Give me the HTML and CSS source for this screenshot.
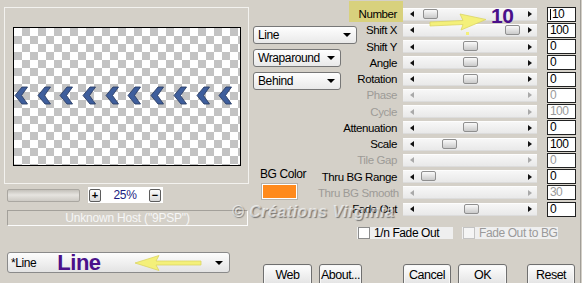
FILE: index.html
```html
<!DOCTYPE html>
<html lang="en">
<head>
  <meta charset="UTF-8">
  <title>Picture Tube • Line</title>
  <link rel="stylesheet" href="styles.css">
</head>
<body>

  <div class="dialog">

    <!-- preview side -->
    <div class="left">
      <div class="preview">
        <div class="canvas">
          <div class="chevrons">
            <svg class="chev" viewBox="0 0 14 19"><path d="M13.5 1 L8 1 L1 9.5 L8 18 L13.5 18 L7.5 9.5 Z"/></svg>
            <svg class="chev" viewBox="0 0 14 19"><path d="M13.5 1 L8 1 L1 9.5 L8 18 L13.5 18 L7.5 9.5 Z"/></svg>
            <svg class="chev" viewBox="0 0 14 19"><path d="M13.5 1 L8 1 L1 9.5 L8 18 L13.5 18 L7.5 9.5 Z"/></svg>
            <svg class="chev" viewBox="0 0 14 19"><path d="M13.5 1 L8 1 L1 9.5 L8 18 L13.5 18 L7.5 9.5 Z"/></svg>
            <svg class="chev" viewBox="0 0 14 19"><path d="M13.5 1 L8 1 L1 9.5 L8 18 L13.5 18 L7.5 9.5 Z"/></svg>
            <svg class="chev" viewBox="0 0 14 19"><path d="M13.5 1 L8 1 L1 9.5 L8 18 L13.5 18 L7.5 9.5 Z"/></svg>
            <svg class="chev" viewBox="0 0 14 19"><path d="M13.5 1 L8 1 L1 9.5 L8 18 L13.5 18 L7.5 9.5 Z"/></svg>
            <svg class="chev" viewBox="0 0 14 19"><path d="M13.5 1 L8 1 L1 9.5 L8 18 L13.5 18 L7.5 9.5 Z"/></svg>
            <svg class="chev" viewBox="0 0 14 19"><path d="M13.5 1 L8 1 L1 9.5 L8 18 L13.5 18 L7.5 9.5 Z"/></svg>
            <svg class="chev" viewBox="0 0 14 19"><path d="M13.5 1 L8 1 L1 9.5 L8 18 L13.5 18 L7.5 9.5 Z"/></svg>
          </div>
        </div>
      </div>

      <div class="zoom-row">
        <div class="progress"></div>
        <div class="zoom-ctl">
          <span class="zbtn">+</span>
          <span class="zval">25%</span>
          <span class="zbtn">−</span>
        </div>
      </div>

      <div class="host">Unknown Host ("9PSP")</div>

      <div class="preset">
        <span class="preset-name">*Line</span>
        <span class="note note-line">Line</span>
        <svg class="arrow-left" width="68" height="18" viewBox="0 0 68 18">
          <polygon points="1,9 25,1.5 22,7 67,7 67,11 22,11 25,16.5"/>
        </svg>
        <span class="caret"></span>
      </div>
    </div>

    <!-- settings side -->
    <div class="right">
      <div class="top">
        <div class="mid">
          <div class="sel sel-line">Line<span class="caret"></span></div>
          <div class="sel">Wraparound<span class="caret"></span></div>
          <div class="sel">Behind<span class="caret"></span></div>
          <div class="bg-label">BG Color</div>
          <div class="swatch"></div>
        </div>

        <div class="sliders">
          <div class="row">
            <span class="label"><span class="hl">Number</span></span>
            <div class="track"><i class="arr-l"></i><i class="arr-r"></i><b class="thumb" style="left:20px"></b></div>
            <span class="val"><i class="cursor"></i>10</span>
          </div>
          <div class="row">
            <span class="label">Shift X</span>
            <div class="track"><i class="arr-l"></i><i class="arr-r"></i><b class="thumb" style="left:102px"></b></div>
            <span class="val">100</span>
          </div>
          <div class="row">
            <span class="label">Shift Y</span>
            <div class="track"><i class="arr-l"></i><i class="arr-r"></i><b class="thumb" style="left:60px"></b></div>
            <span class="val">0</span>
          </div>
          <div class="row">
            <span class="label">Angle</span>
            <div class="track"><i class="arr-l"></i><i class="arr-r"></i><b class="thumb" style="left:60px"></b></div>
            <span class="val">0</span>
          </div>
          <div class="row">
            <span class="label">Rotation</span>
            <div class="track"><i class="arr-l"></i><i class="arr-r"></i><b class="thumb" style="left:60px"></b></div>
            <span class="val">0</span>
          </div>
          <div class="row off">
            <span class="label">Phase</span>
            <div class="track"><i class="arr-l"></i><i class="arr-r"></i></div>
            <span class="val">0</span>
          </div>
          <div class="row off">
            <span class="label">Cycle</span>
            <div class="track"><i class="arr-l"></i><i class="arr-r"></i></div>
            <span class="val">100</span>
          </div>
          <div class="row">
            <span class="label">Attenuation</span>
            <div class="track"><i class="arr-l"></i><i class="arr-r"></i><b class="thumb" style="left:60px"></b></div>
            <span class="val">0</span>
          </div>
          <div class="row">
            <span class="label">Scale</span>
            <div class="track"><i class="arr-l"></i><i class="arr-r"></i><b class="thumb" style="left:39px"></b></div>
            <span class="val">100</span>
          </div>
          <div class="row off">
            <span class="label">Tile Gap</span>
            <div class="track"><i class="arr-l"></i><i class="arr-r"></i></div>
            <span class="val">0</span>
          </div>
          <div class="row">
            <span class="label">Thru BG Range</span>
            <div class="track"><i class="arr-l"></i><i class="arr-r"></i><b class="thumb" style="left:18px"></b></div>
            <span class="val">0</span>
          </div>
          <div class="row off">
            <span class="label">Thru BG Smooth</span>
            <div class="track"><i class="arr-l"></i><i class="arr-r"></i></div>
            <span class="val">30</span>
          </div>
          <div class="row">
            <span class="label">Fade Out</span>
            <div class="track"><i class="arr-l"></i><i class="arr-r"></i><b class="thumb" style="left:61px"></b></div>
            <span class="val">0</span>
          </div>
        </div>
      </div>

      <div class="checks">
        <label class="chk"><span class="box"></span>1/n Fade Out</label>
        <label class="chk off"><span class="box"></span>Fade Out to BG</label>
      </div>

      <div class="buttons">
        <button class="btn b-web">Web</button>
        <button class="btn b-about">About...</button>
        <button class="btn b-cancel">Cancel</button>
        <button class="btn b-ok">OK</button>
        <button class="btn b-reset">Reset</button>
      </div>
    </div>
  </div>

  <!-- tutorial annotations -->
  <div class="note note-ten">10</div>
  <svg class="arrow-right" width="60" height="22" viewBox="0 0 60 22">
    <polygon points="2,11 35,9.5 32,3 58,8.5 33,19 35,13.5 2,15"/>
  </svg>
  <span class="dot"></span>
  <div class="watermark">© Créations Virginia</div>

</body>
</html>
```

FILE: styles.css
```css
* { box-sizing: border-box; }

body {
  margin: 0;
  width: 582px;
  height: 283px;
  overflow: hidden;
  position: relative;
  background: #d4d0c8;
  font-family: "Liberation Sans", Arial, sans-serif;
  font-size: 11.5px;
  letter-spacing: -0.4px;
  color: #000;
}

.dialog {
  display: flex;
  width: 581px;
  height: 283px;
  border-right: 1px solid #a19e97;
}

/* ---------- left: preview ---------- */
.left {
  width: 250px;
  flex: none;
  padding: 7px 0 0 4px;
  display: flex;
  flex-direction: column;
}
.preview {
  width: 245px;
  height: 177px;
  border: 1px solid #f3f2ef;
  padding: 19px 0 0 8px;
}
.canvas {
  width: 228px;
  height: 139px;
  border: 1px solid #000;
  background-color: #fff;
  background-image:
    linear-gradient(45deg, #c3c3c3 25%, transparent 25%, transparent 75%, #c3c3c3 75%),
    linear-gradient(45deg, #c3c3c3 25%, transparent 25%, transparent 75%, #c3c3c3 75%);
  background-size: 16px 16px;
  background-position: 0 0, 8px 8px;
  display: flex;
  align-items: center;
}
.chevrons {
  display: flex;
  gap: 8.7px;
  margin-top: -2px;
}
.chev { width: 14px; height: 19px; }
.chev path {
  fill: #3e5e9c;
  stroke: #2b3e66;
  stroke-width: 0.9;
  stroke-linejoin: round;
}

.zoom-row {
  margin-top: 3px;
  height: 16px;
  display: flex;
  align-items: center;
}
.progress {
  margin-left: 3px;
  width: 73px;
  height: 13px;
  border: 1px solid #aaa7a1;
  border-radius: 2px;
  background: linear-gradient(#c4c1bb, #e6e4e0 45%, #cdcac4);
}
.zoom-ctl {
  margin-left: 8px;
  width: 75px;
  height: 16px;
  background: #fff;
  padding: 0 2px 0 1px;
  display: flex;
  align-items: center;
  justify-content: space-between;
}
.zbtn {
  width: 12px;
  height: 13px;
  border: 1px solid #5c5c5c;
  border-radius: 2px;
  background: linear-gradient(#fbfbfb, #d9d9d9);
  font-size: 11px;
  font-weight: bold;
  line-height: 11px;
  text-align: center;
  letter-spacing: 0;
}
.zval { color: #1b1b80; font-size: 12px; letter-spacing: -0.3px; }

.host {
  margin: 7px 0 0 3px;
  width: 241px;
  height: 16px;
  border-top: 1px solid #a3a09a;
  border-left: 1px solid #a3a09a;
  border-bottom: 1px solid #fbfbfb;
  border-right: 1px solid #fbfbfb;
  color: #f6f6f6;
  text-align: center;
  font-size: 12px;
  line-height: 14px;
  letter-spacing: -0.2px;
}

.preset {
  margin: 26px 0 0 3px;
  width: 223px;
  height: 21px;
  border: 1px solid #8a8a8a;
  border-radius: 3px;
  background: linear-gradient(#fdfdfd, #e3e3e3);
  padding-left: 3px;
  display: flex;
  align-items: center;
}
.preset-name { font-size: 12px; }
.note-line { margin-left: 21px; }
.arrow-left { margin-left: 33px; }
.preset .caret { margin: 0 6px 0 auto; }

.note {
  font-weight: bold;
  font-size: 22px;
  line-height: 1;
  color: #4a108a;
  letter-spacing: -0.5px;
}
.arrow-left polygon, .arrow-right polygon {
  fill: #f4f07a;
  stroke: #dcd663;
  stroke-width: 0.8;
}

.caret {
  width: 0;
  height: 0;
  border-left: 4px solid transparent;
  border-right: 4px solid transparent;
  border-top: 4px solid #000;
}

/* ---------- right: settings ---------- */
.right {
  flex: 1;
  display: flex;
  flex-direction: column;
}
.top { display: flex; }

.mid {
  width: 68px;
  flex: none;
  padding: 26px 0 0 3px;
  display: flex;
  flex-direction: column;
  align-items: flex-start;
}
.sel {
  flex: none;
  width: 88px;
  height: 18px;
  margin-bottom: 5px;
  border: 1px solid #777;
  border-radius: 3px;
  background: linear-gradient(#fefefe, #e9e9e9);
  padding: 0 5px 0 4px;
  display: flex;
  align-items: center;
  justify-content: space-between;
  font-size: 12px;
}
.sel-line { width: 104px; }
.bg-label {
  margin: 72px 0 0 7px;
  line-height: 14px;
  font-size: 12px;
}
.swatch {
  margin: 3px 0 0 9px;
  width: 35px;
  height: 15px;
  background: #ff8a1c;
  border: 1px solid #fff;
  box-shadow: 0 0 0 1px #b5b2ab;
}

.sliders { padding-top: 6px; }
.row {
  height: 16.25px;
  display: flex;
  align-items: center;
}
.label {
  width: 80px;
  padding-right: 1px;
  text-align: right;
  white-space: nowrap;
  line-height: 14px;
}
.off .label { color: #9d9b97; }

.hl { position: relative; z-index: 0; }
.hl::before {
  content: "";
  position: absolute;
  left: -9px;
  right: -6px;
  top: -7px;
  bottom: -2px;
  background: #d8d17d;
  z-index: -1;
}

.track {
  position: relative;
  margin-left: 5px;
  width: 134px;
  height: 13px;
  background: linear-gradient(#f7f7f7, #e9e9e9);
  border-top: 1px solid #fdfdfd;
  border-bottom: 1px solid #dcdcdc;
  padding: 0 5px 0 7px;
  display: flex;
  align-items: center;
  justify-content: space-between;
}
.arr-l, .arr-r {
  width: 0;
  height: 0;
  border-top: 3.5px solid transparent;
  border-bottom: 3.5px solid transparent;
}
.arr-l { border-right: 4px solid #111; }
.arr-r { border-left: 4px solid #111; }
.off .arr-l { border-right-color: #a9a9a9; }
.off .arr-r { border-left-color: #a9a9a9; }
.thumb {
  position: absolute;
  top: 0;
  width: 15px;
  height: 10px;
  border: 1px solid #8f8f8f;
  border-radius: 2px;
  background: linear-gradient(#fafafa, #cacaca);
}

.val {
  margin-left: 10px;
  width: 29px;
  height: 15px;
  border: 1px solid #222;
  background: #fff;
  padding-left: 2px;
  font-size: 12px;
  line-height: 13px;
  letter-spacing: -0.6px;
  display: flex;
  align-items: center;
}
.off .val { color: #9a9a9a; }
.cursor {
  width: 1px;
  height: 11px;
  background: #000;
  margin-right: 1px;
}

.checks {
  display: flex;
  gap: 9px;
  margin: 10px 0 0 107px;
}
.chk {
  width: 96px;
  height: 12px;
  background: #efefef;
  display: flex;
  align-items: center;
  white-space: nowrap;
  font-size: 12px;
}
.box {
  width: 12px;
  height: 12px;
  margin: 0 4px 0 1px;
  border: 1px solid #8c8c8c;
  background: #fff;
}
.chk.off { color: #9a9a9a; }
.chk.off .box { border-color: #c4c4c4; background: #f5f5f5; }

.buttons {
  display: flex;
  margin: 25px 0 0 13px;
}
.btn {
  height: 22px;
  padding: 0;
  border: 1px solid #6f6f6f;
  border-radius: 3px;
  background: linear-gradient(#fefefe, #e2e2e2);
  box-shadow: inset 0 0 0 1px #f7f7f7;
  font-family: inherit;
  font-size: 12.5px;
  letter-spacing: -0.5px;
  color: #000;
}
.b-web { width: 49px; }
.b-about { width: 43px; margin-left: 7px; }
.b-cancel { width: 48px; margin-left: 41px; }
.b-ok { width: 49px; margin-left: 7px; }
.b-reset { width: 48px; margin-left: 20px; }

/* ---------- annotations over the dialog ---------- */
.note-ten {
  position: absolute;
  left: 491px;
  top: 5px;
  font-size: 21px;
}
.arrow-right {
  position: absolute;
  left: 428px;
  top: 11px;
}
.dot {
  position: absolute;
  left: 466px;
  top: 32px;
  width: 3px;
  height: 3px;
  background: #f4f07a;
}
.watermark {
  position: absolute;
  left: 232px;
  top: 203px;
  font-size: 16px;
  font-weight: bold;
  font-style: italic;
  letter-spacing: 0.5px;
  color: rgba(255, 255, 255, 0.6);
  text-shadow: 1px 1px 1px rgba(80, 80, 80, 0.7);
}
```
